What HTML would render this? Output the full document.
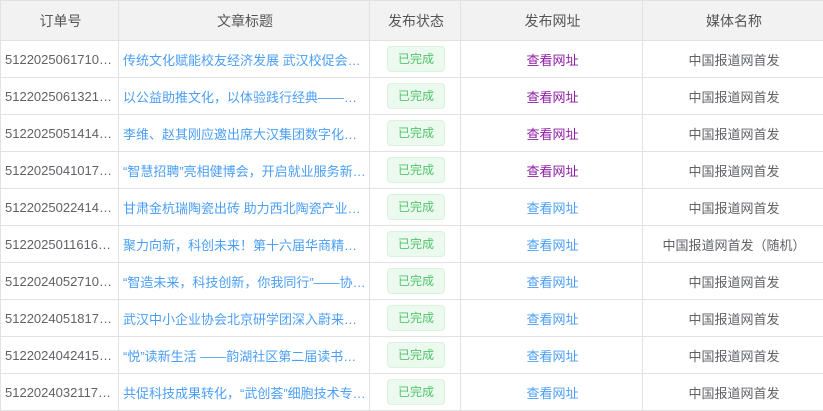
<!DOCTYPE html>
<html><head><meta charset="utf-8"><style>
body{margin:0;background:#fff;font-family:"Liberation Sans","Noto Sans CJK SC",sans-serif;font-size:13px;color:#606266}
table{border-collapse:collapse;table-layout:fixed;width:823px}
td,th{border:1px solid #e2e2e2;padding:0 2px 0 4px;white-space:nowrap;overflow:hidden;text-overflow:ellipsis;text-align:center}
th{height:39px;background:#f2f2f2;font-weight:normal;font-size:14px;color:#555}
td{height:36px}
td.l{text-align:left}
.t{color:#4a9ef8}
.tag{display:inline-block;vertical-align:middle;width:56px;height:24px;line-height:24px;border:1px solid #d9f3dd;background:#ebf9ee;color:#52c46b;border-radius:4px;font-size:12px}
.v{color:#8e1ba6}.u{color:#4a9ef8}
</style></head><body>
<table>
<colgroup><col style="width:118px"><col style="width:251px"><col style="width:91px"><col style="width:182px"><col style="width:181px"></colgroup>
<tr><th>订单号</th><th>文章标题</th><th>发布状态</th><th>发布网址</th><th>媒体名称</th></tr>
<tr><td class="l">5122025061710321</td><td class="l t">传统文化赋能校友经济发展 武汉校促会举办活动</td><td><span class="tag">已完成</span></td><td class="v">查看网址</td><td>中国报道网首发</td></tr>
<tr><td class="l">5122025061321321</td><td class="l t">以公益助推文化，以体验践行经典——净心书院</td><td><span class="tag">已完成</span></td><td class="v">查看网址</td><td>中国报道网首发</td></tr>
<tr><td class="l">5122025051414321</td><td class="l t">李维、赵其刚应邀出席大汉集团数字化转型大会</td><td><span class="tag">已完成</span></td><td class="v">查看网址</td><td>中国报道网首发</td></tr>
<tr><td class="l">5122025041017321</td><td class="l t">“智慧招聘”亮相健博会，开启就业服务新模式</td><td><span class="tag">已完成</span></td><td class="v">查看网址</td><td>中国报道网首发</td></tr>
<tr><td class="l">5122025022414321</td><td class="l t">甘肃金杭瑞陶瓷出砖 助力西北陶瓷产业发展</td><td><span class="tag">已完成</span></td><td class="u">查看网址</td><td>中国报道网首发</td></tr>
<tr><td class="l">5122025011616321</td><td class="l t">聚力向新，科创未来！第十六届华商精英大会</td><td><span class="tag">已完成</span></td><td class="u">查看网址</td><td>中国报道网首发（随机）</td></tr>
<tr><td class="l">5122024052710321</td><td class="l t">“智造未来，科技创新，你我同行”——协会活动</td><td><span class="tag">已完成</span></td><td class="u">查看网址</td><td>中国报道网首发</td></tr>
<tr><td class="l">5122024051817321</td><td class="l t">武汉中小企业协会北京研学团深入蔚来、小米</td><td><span class="tag">已完成</span></td><td class="u">查看网址</td><td>中国报道网首发</td></tr>
<tr><td class="l">5122024042415321</td><td class="l t">“悦”读新生活 ——韵湖社区第二届读书生活节</td><td><span class="tag">已完成</span></td><td class="u">查看网址</td><td>中国报道网首发</td></tr>
<tr><td class="l">5122024032117321</td><td class="l t">共促科技成果转化，“武创荟”细胞技术专场活动</td><td><span class="tag">已完成</span></td><td class="u">查看网址</td><td>中国报道网首发</td></tr>
</table>
</body></html>
